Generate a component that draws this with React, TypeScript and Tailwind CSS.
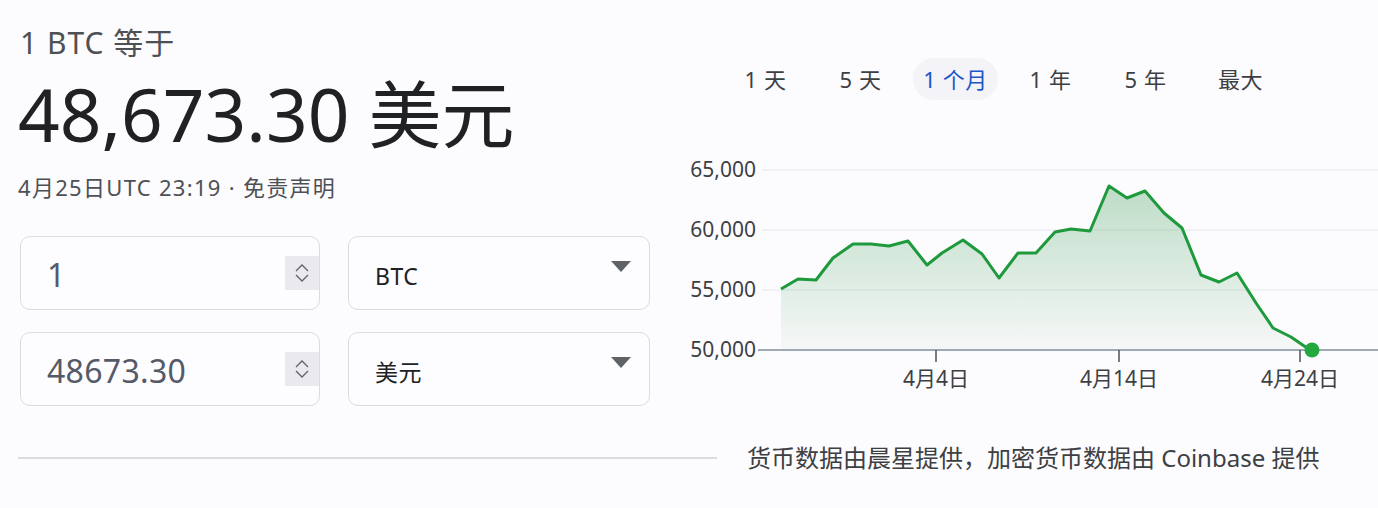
const FONT = '"Noto Sans", "Noto Sans CJK SC", sans-serif';

const points: [number, number][] = [
  [101, 139], [118, 129], [136, 130], [153, 108], [173, 94], [191, 94], [209, 96], [228, 91],
  [247, 115], [262, 103], [283, 90], [302, 104], [319, 128], [338, 103], [356, 103], [375, 82],
  [391, 79], [410, 81], [429, 36], [447, 48], [465, 41], [484, 63], [502, 78], [521, 125],
  [539, 132], [557, 123], [576, 153], [593, 178], [611, 187], [630, 200],
];

const tabs = ['1 天', '5 天', '1 个月', '1 年', '5 年', '最大'];

function Spinner() {
  return (
    <div className="flex h-[34px] w-[34px] flex-col items-center justify-center gap-[2px] bg-[#e9e9ee]">
      <svg width="14" height="8" viewBox="0 0 14 8" fill="none" stroke="#5f6368" strokeWidth="1.3">
        <path d="M1 7 L7 1 L13 7" />
      </svg>
      <svg width="14" height="8" viewBox="0 0 14 8" fill="none" stroke="#5f6368" strokeWidth="1.3">
        <path d="M1 1 L7 7 L13 1" />
      </svg>
    </div>
  );
}

function AmountRow({ value, unit }: { value: string; unit: string }) {
  return (
    <div className="flex gap-[28px]">
      <div className="flex h-[74px] w-[300px] items-center justify-between rounded-[10px] border border-[#dadce0] bg-[#fdfcfe] pl-[26px]">
        <span className="mt-[4px] text-[32px] tracking-[0.3px] text-[#555a68]">{value}</span>
        <Spinner />
      </div>
      <div className="flex h-[74px] w-[302px] items-center justify-between rounded-[10px] border border-[#dadce0] bg-[#fdfcfe] pl-[26px] pr-[18px]">
        <span className="mt-[6px] text-[23px] tracking-[0.5px] text-[#202124]">{unit}</span>
        <svg width="20" height="12" viewBox="0 0 20 12" className="mb-[12px]">
          <path d="M0 0 L20 0 L10 11 Z" fill="#5f6368" />
        </svg>
      </div>
    </div>
  );
}

function Chart() {
  const line = points.map(([x, y], i) => `${i === 0 ? 'M' : 'L'}${x} ${y}`).join(' ');
  const area = `${line} L630 200 L101 200 Z`;
  const yLabels = [
    { y: 20, t: '65,000' },
    { y: 80, t: '60,000' },
    { y: 140, t: '55,000' },
    { y: 200, t: '50,000' },
  ];
  const xTicks = [
    { x: 256, t: '4月4日' },
    { x: 439, t: '4月14日' },
    { x: 620, t: '4月24日' },
  ];
  return (
    <svg width="698" height="245" viewBox="0 0 698 245" style={{ fontFamily: FONT }}>
      <defs>
        <linearGradient id="fill" x1="0" y1="0" x2="0" y2="1">
          <stop offset="0%" stopColor="#1e8e3e" stopOpacity="0.28" />
          <stop offset="100%" stopColor="#1e8e3e" stopOpacity="0.03" />
        </linearGradient>
      </defs>
      {[20, 80, 140].map((y) => (
        <line key={y} x1="82" x2="698" y1={y} y2={y} stroke="#eeeef2" strokeWidth="1.5" />
      ))}
      <path d={area} fill="url(#fill)" />
      <line x1="78" x2="698" y1="200" y2="200" stroke="#7f8f9c" strokeWidth="1.5" />
      {xTicks.map((tk) => (
        <g key={tk.t}>
          <line x1={tk.x} x2={tk.x} y1="200" y2="212" stroke="#4d5156" strokeWidth="1.5" />
          <text x={tk.x} y="236" textAnchor="middle" fontSize="21" fill="#3c4043">{tk.t}</text>
        </g>
      ))}
      {yLabels.map((l) => (
        <text key={l.t} x="76" y={l.y + 7} textAnchor="end" fontSize="21" fill="#3c4043">{l.t}</text>
      ))}
      <path d={line} fill="none" stroke="#1e9a3c" strokeWidth="3" strokeLinejoin="round" />
      <circle cx="632" cy="200" r="7.5" fill="#22a83f" />
    </svg>
  );
}

export default function App() {
  return (
    <div className="h-[508px] w-[1378px] overflow-hidden bg-[#fcfbfd]" style={{ fontFamily: FONT }}>
      <div className="flex">
        <div className="w-[680px] pl-[18px]">
          <div className="pt-[24px] pl-[2px] text-[30px] leading-[38px] tracking-[1px] text-[#4d5156]">1 BTC 等于</div>
          <div className="mt-[10px] text-[73px] leading-[84px] text-[#202124]">48,673.30 美元</div>
          <div className="mt-[16px] text-[22px] leading-[30px] tracking-[1.3px] text-[#4d5156]">4月25日UTC 23:19 · 免责声明</div>
          <div className="mt-[34px] flex flex-col gap-[22px] pl-[2px]">
            <AmountRow value="1" unit="BTC" />
            <AmountRow value="48673.30" unit="美元" />
          </div>
        </div>
        <div className="flex w-[698px] flex-col">
          <div className="mt-[58px] flex h-[42px] items-center pl-[38px]">
            {tabs.map((t) => (
              <div key={t} className="flex w-[95px] justify-center">
                {t === '1 个月' ? (
                  <div className="flex h-[42px] items-center rounded-full bg-[#f3f3f8] px-[10px] text-[22px] tracking-[0.5px] text-[#1b56c9]">
                    {t}
                  </div>
                ) : (
                  <div className="text-[22px] tracking-[0.5px] text-[#3c4043]">{t}</div>
                )}
              </div>
            ))}
          </div>
          <div className="mt-[50px]">
            <Chart />
          </div>
        </div>
      </div>
      <div className="mt-[34px] flex items-center">
        <div className="ml-[18px] h-[1.5px] w-[699px] bg-[#dcdce0]" />
        <div className="ml-[30px] text-[24px] text-[#3c4043]">货币数据由晨星提供，加密货币数据由 Coinbase 提供</div>
      </div>
    </div>
  );
}
